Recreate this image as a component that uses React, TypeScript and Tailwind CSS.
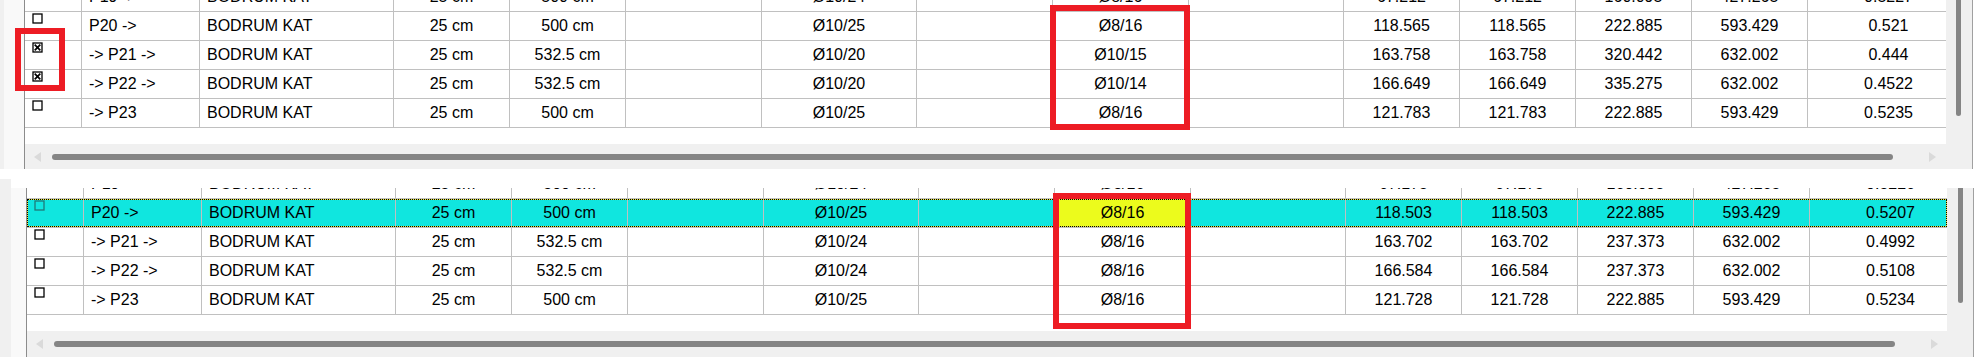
import React from 'react';

type Row = { checked: boolean; cells: string[] };

const COLS = [
  'w-[57px]',
  'w-[118px]',
  'w-[194px]',
  'w-[116px]',
  'w-[116px]',
  'w-[136px]',
  'w-[155px]',
  'w-[136px]',
  'w-[136px]',
  'w-[155px]',
  'w-[116px]',
  'w-[116px]',
  'w-[116px]',
  'w-[116px]',
  'w-[162px]',
];

const TOP_ROWS: Row[] = [
  { checked: false, cells: ['P19 ->', 'BODRUM KAT', '25 cm', '500 cm', '', 'Ø10/24', '', 'Ø8/16', '', '67.212', '67.212', '160.095', '427.265', '0.5227'] },
  { checked: false, cells: ['P20 ->', 'BODRUM KAT', '25 cm', '500 cm', '', 'Ø10/25', '', 'Ø8/16', '', '118.565', '118.565', '222.885', '593.429', '0.521'] },
  { checked: true, cells: ['-> P21 ->', 'BODRUM KAT', '25 cm', '532.5 cm', '', 'Ø10/20', '', 'Ø10/15', '', '163.758', '163.758', '320.442', '632.002', '0.444'] },
  { checked: true, cells: ['-> P22 ->', 'BODRUM KAT', '25 cm', '532.5 cm', '', 'Ø10/20', '', 'Ø10/14', '', '166.649', '166.649', '335.275', '632.002', '0.4522'] },
  { checked: false, cells: ['-> P23', 'BODRUM KAT', '25 cm', '500 cm', '', 'Ø10/25', '', 'Ø8/16', '', '121.783', '121.783', '222.885', '593.429', '0.5235'] },
];

const BOTTOM_ROWS: Row[] = [
  { checked: false, cells: ['P19 ->', 'BODRUM KAT', '25 cm', '500 cm', '', 'Ø10/24', '', 'Ø8/16', '', '67.175', '67.175', '160.095', '427.265', '0.5226'] },
  { checked: false, cells: ['P20 ->', 'BODRUM KAT', '25 cm', '500 cm', '', 'Ø10/25', '', 'Ø8/16', '', '118.503', '118.503', '222.885', '593.429', '0.5207'] },
  { checked: false, cells: ['-> P21 ->', 'BODRUM KAT', '25 cm', '532.5 cm', '', 'Ø10/24', '', 'Ø8/16', '', '163.702', '163.702', '237.373', '632.002', '0.4992'] },
  { checked: false, cells: ['-> P22 ->', 'BODRUM KAT', '25 cm', '532.5 cm', '', 'Ø10/24', '', 'Ø8/16', '', '166.584', '166.584', '237.373', '632.002', '0.5108'] },
  { checked: false, cells: ['-> P23', 'BODRUM KAT', '25 cm', '500 cm', '', 'Ø10/25', '', 'Ø8/16', '', '121.728', '121.728', '222.885', '593.429', '0.5234'] },
];

const CheckBox = ({ checked, dim }: { checked: boolean; dim?: boolean }) => {
  const c = dim ? '#1f7a78' : '#000000';
  return (
    <svg width="11" height="11" viewBox="0 0 11 11">
      <rect x="1" y="1" width="9" height="9" fill="none" stroke={c} strokeWidth="1.3" />
      {checked && <path d="M2.7 2.7L8.3 8.3M8.3 2.7L2.7 8.3" stroke={c} strokeWidth="1.7" />}
    </svg>
  );
};

const GridRow = ({ row, highlight }: { row: Row; highlight?: boolean }) => (
  <div className="relative flex h-[29px] shrink-0 border-b border-[#c0c0c0]">
    <div className={`${COLS[0]} shrink-0 border-r border-[#c0c0c0] pl-[7px] pt-[1px] ${highlight ? 'bg-[#10e6df]' : ''}`}>
      <CheckBox checked={row.checked} dim={highlight} />
    </div>
    {row.cells.map((text, i) => {
      const left = i < 2;
      const yellow = highlight && i === 7;
      return (
        <div
          key={i}
          className={`${COLS[i + 1]} shrink-0 flex items-center border-r border-[#c0c0c0] whitespace-nowrap ${
            left ? 'pl-[7px]' : 'justify-center'
          } ${yellow ? 'bg-[#ecfb1c]' : highlight ? 'bg-[#10e6df]' : ''}`}
        >
          {text}
        </div>
      );
    })}
    {highlight && (
      <>
        <div className="absolute inset-0 border border-[#e8e838] pointer-events-none" />
        <div className="absolute inset-0 border border-dotted border-black pointer-events-none" />
      </>
    )}
  </div>
);

type PanelProps = {
  rows: Row[];
  highlightFirst?: boolean;
  stripDark: string;
  stripLight: string;
  gridW: string;
  gridH: string;
  rowsOffset: string;
  hscrollH: string;
  vthumb: string;
  rightW: string;
};

const Panel = (p: PanelProps) => (
  <div className="flex h-[169px] shrink-0 overflow-hidden">
    <div className={`${p.stripDark} bg-[#f0f0f0]`} />
    <div className={`${p.stripLight} bg-[#f9f9f9]`} />
    <div className="w-px bg-[#8c8c8c]" />
    <div className={`${p.gridW} flex flex-col shrink-0`}>
      <div className={`${p.gridH} overflow-hidden bg-white`}>
        <div className={`${p.rowsOffset} flex flex-col`}>
          {p.rows.map((r, i) => (
            <GridRow key={i} row={r} highlight={p.highlightFirst && i === 1} />
          ))}
        </div>
      </div>
      <div className={`${p.hscrollH} flex items-center bg-[#f0f0f0]`}>
        <svg className="ml-[8px] shrink-0" width="9" height="12" viewBox="0 0 9 12">
          <path d="M8 1L1 6L8 11Z" fill="#dadada" />
        </svg>
        <div className="ml-[10px] h-[6px] w-[1841px] shrink-0 rounded-full bg-[#858585]" />
        <svg className="ml-[35px] shrink-0" width="9" height="12" viewBox="0 0 9 12">
          <path d="M1 1L8 6L1 11Z" fill="#dadada" />
        </svg>
      </div>
    </div>
    <div className="w-[26px] shrink-0 bg-[#f0f0f0]">
      <div className={`${p.vthumb} w-[5px] rounded-b-full bg-[#858585]`} />
    </div>
    <div className="w-px bg-[#a0a0a0]" />
    <div className={`${p.rightW} bg-white`} />
  </div>
);

export default function App() {
  return (
    <div className="relative w-[1982px] h-[357px] overflow-hidden bg-white text-black text-[16px] font-['Liberation_Sans',Arial,sans-serif]">
      <div className="flex flex-col">
        <Panel
          rows={TOP_ROWS}
          stripDark="w-[4px]"
          stripLight="w-[20px]"
          gridW="w-[1921px]"
          gridH="h-[144px]"
          rowsOffset="-mt-[17px]"
          hscrollH="h-[25px]"
          vthumb="ml-[10px] h-[116px]"
          rightW="w-[9px]"
        />
        <div className="flex h-[19px] flex-col">
          <div className="h-[10px] bg-white" />
          <div className="h-[9px] w-[11px] bg-[#f0f0f0]" />
        </div>
        <Panel
          rows={BOTTOM_ROWS}
          highlightFirst
          stripDark="w-[11px]"
          stripLight="w-[15px]"
          gridW="w-[1920px]"
          gridH="h-[143px]"
          rowsOffset="-mt-[18px]"
          hscrollH="h-[26px]"
          vthumb="ml-[11px] h-[115px]"
          rightW="w-[8px]"
        />
      </div>

      {/* red annotation boxes */}
      <div className="absolute left-[15px] top-[28px] w-[50px] h-[63px] border-[6px] border-[#ed1c24]" />
      <div className="absolute left-[1050px] top-[5px] w-[140px] h-[125px] border-[6px] border-[#ed1c24]" />
      <div className="absolute left-[1053px] top-[193px] w-[138px] h-[136px] border-[6px] border-[#ed1c24]" />
    </div>
  );
}
